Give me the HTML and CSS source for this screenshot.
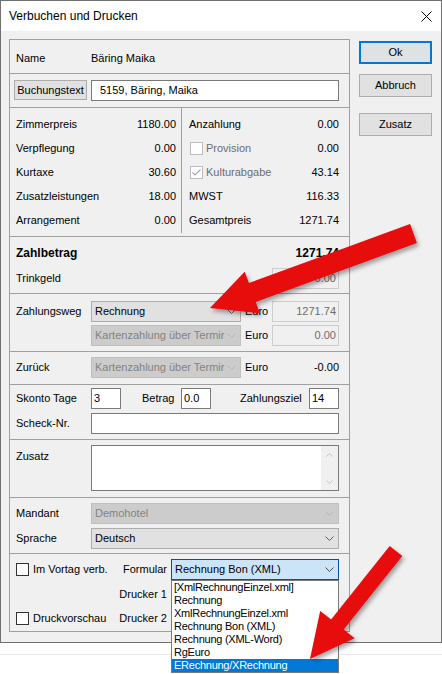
FILE: index.html
```html
<!DOCTYPE html>
<html lang="de">
<head>
<meta charset="utf-8">
<title>Verbuchen und Drucken</title>
<link rel="stylesheet" href="styles.css">
</head>
<body>
<div class="window">
  <div class="titlebar">
    <span class="title">Verbuchen und Drucken</span>
    <svg class="close" width="11" height="11" viewBox="0 0 11 11"><path d="M0.5 0.5L10.5 10.5M10.5 0.5L0.5 10.5" stroke="#000" stroke-width="1" fill="none"/></svg>
  </div>
  <div class="client">
    <div class="panel">
      <div class="sec s-name"><span class="lbl">Name</span><span>Bäring Maika</span></div>

      <div class="sec s-text">
        <div class="btn btn-bt">Buchungstext</div>
        <div class="input w-full pad8">5159, Bäring, Maika</div>
      </div>

      <div class="sec s-grid">
        <div class="col-l">
          <div class="grow"><span>Zimmerpreis</span><span>1180.00</span></div>
          <div class="grow"><span>Verpflegung</span><span>0.00</span></div>
          <div class="grow"><span>Kurtaxe</span><span>30.60</span></div>
          <div class="grow"><span>Zusatzleistungen</span><span>18.00</span></div>
          <div class="grow"><span>Arrangement</span><span>0.00</span></div>
        </div>
        <div class="col-r">
          <div class="grow"><span>Anzahlung</span><span>0.00</span></div>
          <div class="grow"><span class="cbl"><span class="cb cb-dis"></span><span class="dis-t">Provision</span></span><span>0.00</span></div>
          <div class="grow"><span class="cbl"><span class="cb cb-dis"><svg width="11" height="11" viewBox="0 0 11 11"><path d="M1.5 5.5L4 8L9.5 2.5" stroke="#a6a6a6" stroke-width="1.2" fill="none"/></svg></span><span class="dis-t">Kulturabgabe</span></span><span>43.14</span></div>
          <div class="grow"><span>MWST</span><span>116.33</span></div>
          <div class="grow"><span>Gesamtpreis</span><span>1271.74</span></div>
        </div>
      </div>

      <div class="sec s-pay">
        <div class="prow1"><span class="bold">Zahlbetrag</span><span class="bold">1271.74</span></div>
        <div class="prow2"><span>Trinkgeld</span><div class="input w-amt dis">0.00</div></div>
      </div>

      <div class="sec s-way">
        <div class="wrow">
          <span class="lbl">Zahlungsweg</span>
          <div class="combo w-mid"><span class="ctext">Rechnung</span><svg class="chev" width="9" height="5" viewBox="0 0 9 5"><path d="M0.5 0.5L4.5 4.5L8.5 0.5" stroke="#606060" fill="none"/></svg></div>
          <span class="euro">Euro</span>
          <div class="input w-amt dis">1271.74</div>
        </div>
        <div class="wrow">
          <span class="lbl"></span>
          <div class="combo combo-dis w-mid"><span class="ctext">Kartenzahlung über Termir</span><svg class="chev" width="9" height="5" viewBox="0 0 9 5"><path d="M0.5 0.5L4.5 4.5L8.5 0.5" stroke="#b4b4b4" fill="none"/></svg></div>
          <span class="euro">Euro</span>
          <div class="input w-amt dis">0.00</div>
        </div>
      </div>

      <div class="sec s-back">
        <div class="wrow">
          <span class="lbl">Zurück</span>
          <div class="combo combo-dis w-mid"><span class="ctext">Kartenzahlung über Termir</span><svg class="chev" width="9" height="5" viewBox="0 0 9 5"><path d="M0.5 0.5L4.5 4.5L8.5 0.5" stroke="#b4b4b4" fill="none"/></svg></div>
          <span class="euro">Euro</span>
          <span class="amt-text">-0.00</span>
        </div>
      </div>

      <div class="sec s-skonto">
        <div class="srow">
          <span class="lbl">Skonto Tage</span>
          <div class="input w-small">3</div>
          <span class="betrag">Betrag</span>
          <div class="input w-small">0.0</div>
          <span class="ziel">Zahlungsziel</span>
          <div class="input w-small">14</div>
        </div>
        <div class="srow">
          <span class="lbl">Scheck-Nr.</span>
          <div class="input w-full"></div>
        </div>
      </div>

      <div class="sec s-zusatz">
        <span class="lbl zlbl">Zusatz</span>
        <div class="textarea">
          <div class="ta-text"></div>
          <div class="vscroll">
            <div class="sbtn"><svg width="7" height="4" viewBox="0 0 7 4"><path d="M0.5 3.5L3.5 0.5L6.5 3.5" stroke="#c2c2c2" fill="none"/></svg></div>
            <div class="sbtn"><svg width="7" height="4" viewBox="0 0 7 4"><path d="M0.5 0.5L3.5 3.5L6.5 0.5" stroke="#c2c2c2" fill="none"/></svg></div>
          </div>
        </div>
      </div>

      <div class="sec s-mand">
        <div class="srow">
          <span class="lbl">Mandant</span>
          <div class="combo combo-dis w-full"><span class="ctext">Demohotel</span><svg class="chev" width="9" height="5" viewBox="0 0 9 5"><path d="M0.5 0.5L4.5 4.5L8.5 0.5" stroke="#b4b4b4" fill="none"/></svg></div>
        </div>
        <div class="srow">
          <span class="lbl">Sprache</span>
          <div class="combo w-full"><span class="ctext">Deutsch</span><svg class="chev" width="9" height="5" viewBox="0 0 9 5"><path d="M0.5 0.5L4.5 4.5L8.5 0.5" stroke="#606060" fill="none"/></svg></div>
        </div>
      </div>

      <div class="sec s-bottom">
        <div class="brow">
          <div class="bleft"><span class="cb"></span><span class="cbtext">Im Vortag verb.</span><span class="rlbl">Formular</span></div>
          <div class="combo combo-focus w-form"><span class="ctext">Rechnung Bon (XML)</span><svg class="chev" width="9" height="5" viewBox="0 0 9 5"><path d="M0.5 0.5L4.5 4.5L8.5 0.5" stroke="#505050" fill="none"/></svg></div>
        </div>
        <div class="brow brow2">
          <div class="bleft"><span class="rlbl">Drucker 1</span></div>
        </div>
        <div class="brow brow3">
          <div class="bleft"><span class="cb"></span><span class="cbtext">Druckvorschau</span><span class="rlbl">Drucker 2</span></div>
        </div>
      </div>
    </div>

    <div class="buttons">
      <div class="btn btn-side btn-default">Ok</div>
      <div class="btn btn-side btn-abbr">Abbruch</div>
      <div class="btn btn-side btn-zus">Zusatz</div>
    </div>
  </div>
</div>
<div class="under"><div class="under-line"></div></div>

<ul class="droplist">
  <li>[XmlRechnungEinzel.xml]</li>
  <li>Rechnung</li>
  <li>XmlRechnungEinzel.xml</li>
  <li>Rechnung Bon (XML)</li>
  <li>Rechnung (XML-Word)</li>
  <li>RgEuro</li>
  <li class="sel">ERechnung/XRechnung</li>
</ul>

<svg class="arrows" width="442" height="674" viewBox="0 0 442 674">
  <defs>
    <filter id="sh" x="-20%" y="-20%" width="140%" height="140%">
      <feDropShadow dx="2" dy="3" stdDeviation="2" flood-color="#000" flood-opacity="0.35"/>
    </filter>
  </defs>
  <polygon filter="url(#sh)" fill="#e8080b" points="210,308 244.7,271.8 248.9,283.1 410.1,224.1 416.9,242.9 255.7,301.9 259.9,313.2"/>
  <polygon filter="url(#sh)" fill="#e8080b" points="310,659 320.2,610.9 331.1,619.6 389.7,546 402.3,556 343.7,629.6 354.6,638.3"/>
</svg>
</body>
</html>
```

FILE: styles.css
```css
* { box-sizing: border-box; }
html, body { margin: 0; padding: 0; }
body {
  width: 442px;
  height: 674px;
  overflow: hidden;
  position: relative;
  background: #fff;
  font-family: "Liberation Sans", Arial, sans-serif;
  font-size: 11px;
  line-height: 13px;
  color: #000;
}

.window {
  width: 442px;
  height: 643px;
  border: 1px solid #707070;
  display: flex;
  flex-direction: column;
}
.titlebar {
  height: 30px;
  flex: none;
  background: #fff;
  display: flex;
  align-items: center;
  justify-content: space-between;
  padding: 0 9px 0 8px;
}
.title { font-size: 12px; }
.close { display: block; }

.client {
  flex: 1;
  background: #f0f0f0;
  display: flex;
  align-items: flex-start;
  padding: 8px 0 0 8px;
}

.panel {
  width: 341px;
  height: 593px;
  border: 1px solid #a0a0a0;
  flex: none;
}
.sec { border-top: 1px solid #a0a0a0; }
.sec:first-child { border-top: none; }

.lbl { width: 75px; flex: none; }
.bold { font-weight: bold; font-size: 12px; }
.dis-t { color: #6d6d6d; }

/* inputs */
.input {
  height: 21px;
  border: 1px solid #7a7a7a;
  background: #fff;
  padding: 0 2px;
  display: flex;
  align-items: center;
  flex: none;
  white-space: nowrap;
}
.input.dis {
  background: #f0f0f0;
  border-color: #cccccc;
  color: #6d6d6d;
  justify-content: flex-end;
}
.pad8 { padding-left: 8px; }
.w-full { width: 248px; }
.w-amt { width: 67px; }
.w-small { width: 30px; }
.w-mid { width: 150px; }
.w-form { width: 168px; }

/* combo */
.combo {
  height: 21px;
  border: 1px solid #adadad;
  background: #e1e1e1;
  display: flex;
  align-items: center;
  justify-content: space-between;
  padding: 0 4px 0 3px;
  flex: none;
}
.combo-dis {
  background: #cccccc;
  border-color: #bfbfbf;
  color: #838383;
}
.combo-focus {
  background: #cce4f7;
  border-color: #005499;
}
.ctext { white-space: nowrap; }
.chev { display: block; flex: none; }

/* buttons */
.btn {
  background: #e1e1e1;
  border: 1px solid #adadad;
  display: flex;
  align-items: center;
  justify-content: center;
  flex: none;
}
.btn-bt { width: 73px; height: 20px; margin-right: 4px; }

/* section 1 */
.s-name {
  height: 33px;
  display: flex;
  align-items: center;
  padding: 4px 0 0 6px;
}

/* section 2 */
.s-text {
  height: 34px;
  display: flex;
  align-items: flex-start;
  padding: 6px 0 0 4px;
}

/* section 3 */
.s-grid { height: 129px; display: flex; }
.col-l { width: 171px; height: 125px; padding: 4px 5px 0 6px; }
.col-r {
  width: 168px;
  height: 125px;
  border-left: 1px solid #a0a0a0;
  padding: 4px 10px 0 7px;
}
.grow {
  height: 24px;
  display: flex;
  align-items: center;
  justify-content: space-between;
}
.cbl { display: flex; align-items: center; }
.cb {
  width: 13px;
  height: 13px;
  border: 1px solid #333;
  background: #fff;
  flex: none;
  display: flex;
  align-items: center;
  justify-content: center;
}
.cbl .cb { margin: 0 3px 0 1px; }
.cb-dis { border-color: #bcbcbc; }

/* section 4 */
.s-pay { height: 57px; padding: 4px 10px 0 6px; }
.prow1 {
  height: 24px;
  display: flex;
  align-items: center;
  justify-content: space-between;
}
.prow2 {
  height: 26px;
  display: flex;
  align-items: center;
  justify-content: space-between;
}

/* section 5/6 */
.s-way { height: 58px; padding: 5px 10px 0 6px; }
.s-back { height: 33px; padding: 3px 10px 0 6px; }
.wrow { height: 24px; display: flex; align-items: center; }
.euro { width: 31px; padding-left: 4px; flex: none; }
.amt-text { width: 67px; text-align: right; flex: none; }

/* section 7 */
.s-skonto {
  height: 55px;
  padding: 3px 10px 0 6px;
  display: flex;
  flex-direction: column;
  gap: 4px;
}
.srow { height: 21px; display: flex; align-items: center; }
.betrag { margin-left: 21px; width: 39px; flex: none; }
.ziel { margin-left: 29px; width: 69px; flex: none; }

/* section 8 */
.s-zusatz {
  height: 58px;
  padding: 5px 10px 0 6px;
  display: flex;
  align-items: flex-start;
}
.zlbl { margin-top: 5px; }
.textarea {
  width: 248px;
  height: 46px;
  border: 1px solid #7a7a7a;
  background: #fff;
  display: flex;
}
.ta-text { flex: 1; }
.vscroll {
  width: 17px;
  background: #f0f0f0;
  display: flex;
  flex-direction: column;
  justify-content: space-between;
}
.sbtn {
  height: 17px;
  display: flex;
  align-items: center;
  justify-content: center;
}
.sbtn svg { display: block; }

/* section 9 */
.s-mand {
  height: 56px;
  padding: 5px 10px 0 6px;
  display: flex;
  flex-direction: column;
  gap: 4px;
}

/* section 10 */
.s-bottom {
  height: 78px;
  padding: 5px 10px 0 6px;
  display: flex;
  flex-direction: column;
}
.brow { height: 21px; display: flex; align-items: center; }
.brow2 { margin-top: 4px; }
.brow3 { margin-top: 3px; }
.bleft {
  width: 151px;
  flex: none;
  display: flex;
  align-items: center;
  margin-right: 4px;
}
.cbtext { margin-left: 4px; }
.rlbl { margin-left: auto; }

/* side buttons */
.buttons {
  margin-left: 9px;
  padding-top: 2px;
  display: flex;
  flex-direction: column;
}
.btn-side { width: 73px; height: 23px; }
.btn-default { border: 2px solid #0078d7; }
.btn-abbr { margin-top: 10px; }
.btn-zus { margin-top: 16px; }

/* below window */
.under { height: 31px; padding-top: 11px; }
.under-line { border-top: 1px solid #e6e6e6; }

/* dropdown popup */
.droplist {
  position: absolute;
  left: 171px;
  top: 580px;
  width: 168px;
  margin: 0;
  padding: 0;
  list-style: none;
  background: #fff;
  border: 1px solid #7a7a7a;
}
.droplist li {
  height: 13px;
  line-height: 13px;
  padding-left: 2px;
  letter-spacing: -0.25px;
  white-space: nowrap;
}
.droplist li.sel { background: #0078d7; color: #fff; }

.arrows {
  position: absolute;
  left: 0;
  top: 0;
  pointer-events: none;
}
```
